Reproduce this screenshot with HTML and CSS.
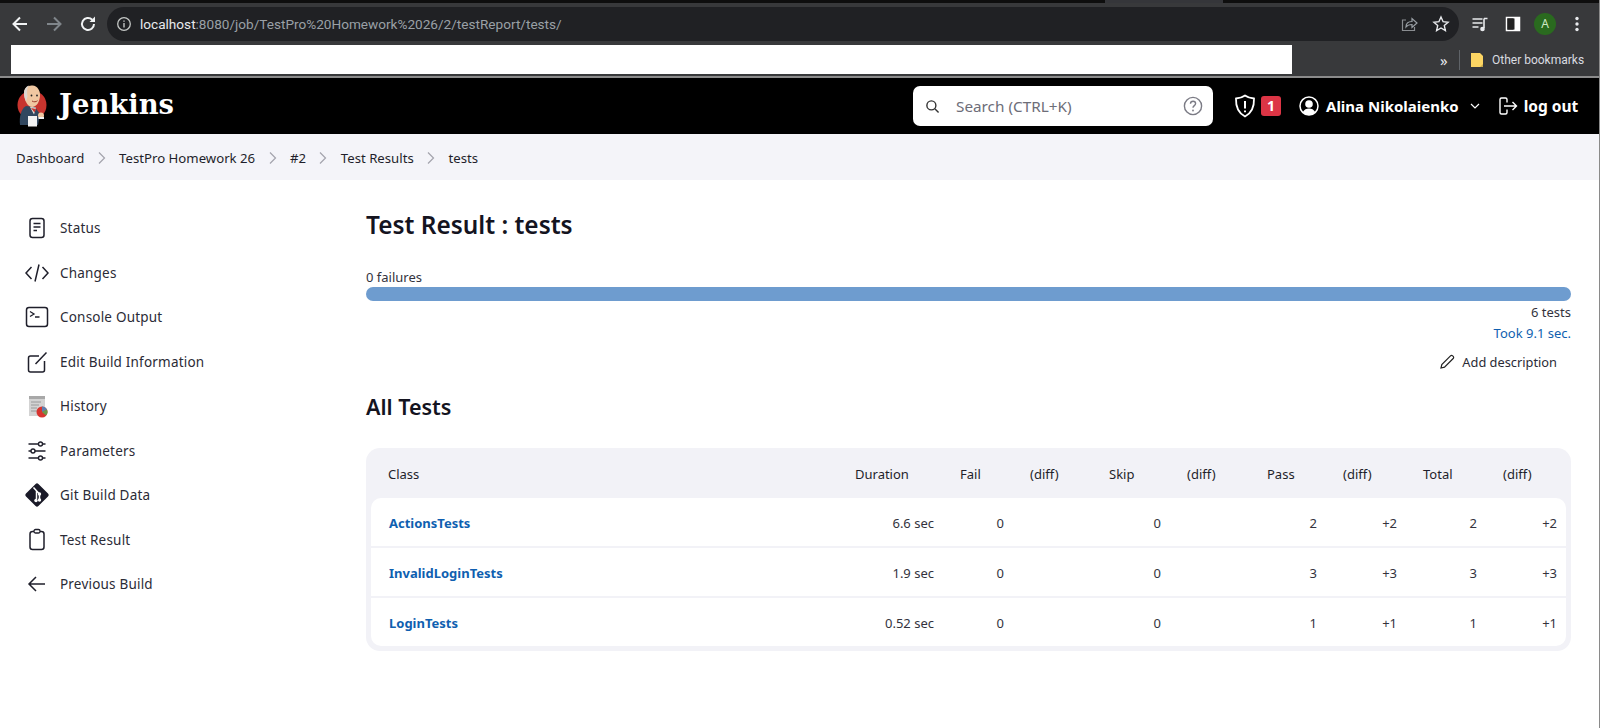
FILE: index.html
```html
<!DOCTYPE html>
<html lang="en">
<head>
  <meta charset="UTF-8" />
  <title>tests [Jenkins]</title>
  <link rel="stylesheet" href="styles.css">
</head>
<body>

  <div class="tabstrip"><div class="tab-edge"></div></div>

  <div class="toolbar">
    <svg class="nav-icon" viewBox="0 0 20 20"><path d="M17 10H4M10 3.5 3.5 10l6.500 6.500" fill="none" stroke="#f1f3f4" stroke-width="2"/></svg>
    <svg class="nav-icon" viewBox="0 0 20 20"><path d="M3 10h13M10 3.5l6.500 6.500-6.500 6.500" fill="none" stroke="#80868b" stroke-width="2"/></svg>
    <svg class="nav-icon" viewBox="0 0 20 20"><path d="M16 10a6 6 0 1 1-1.800-4.300" fill="none" stroke="#f1f3f4" stroke-width="2"/><path d="M17 2.500V8h-5.500z" fill="#f1f3f4"/></svg>
    <div class="omnibox">
      <svg class="info-icon" viewBox="0 0 16 16"><circle cx="8" cy="8" r="6.300" fill="none" stroke="#c4c7c5" stroke-width="1.300"/><path d="M8 7v4.500M8 4.500v1.300" stroke="#c4c7c5" stroke-width="1.400"/></svg>
      <span class="url"><span class="url-host">localhost</span>:8080/job/TestPro%20Homework%2026/2/testReport/tests/</span>
      <svg class="omni-icon" viewBox="0 0 18 18"><path d="M6 5H2.500v10.500h12V12" fill="none" stroke="#8a8d91" stroke-width="1.200"/><path d="M6 12c0-4 3-5.500 6-5.500V3.500L17 8l-5 4.500V9.500c-2.500 0-4.500.5-6 2.500z" fill="none" stroke="#9aa0a6" stroke-width="1.200"/></svg>
      <svg class="omni-icon" viewBox="0 0 18 18"><path d="m9 2 2.100 4.700 5 .5-3.800 3.400 1.100 5L9 13l-4.400 2.600 1.100-5L1.900 7.200l5-.5z" fill="none" stroke="#e8eaed" stroke-width="1.400"/></svg>
    </div>
    <div class="toolbar-right">
      <svg class="tool-icon" viewBox="0 0 18 18"><path d="M1.500 4h10M1.500 8h10M1.500 12h6" stroke="#e8eaed" stroke-width="1.600"/><path d="M13 3.500h3.500M13 3.500V13" stroke="#e8eaed" stroke-width="1.600" fill="none"/><circle cx="11.500" cy="14" r="2.300" fill="#e8eaed"/></svg>
      <svg class="tool-icon" viewBox="0 0 18 18"><rect x="2.500" y="2.500" width="13" height="13" fill="none" stroke="#fff" stroke-width="1.500"/><rect x="9.500" y="2.500" width="6" height="13" fill="#fff"/><rect x="3.500" y="3.500" width="7" height="11" fill="#222"/></svg>
      <div class="avatar">A</div>
      <svg class="tool-icon" viewBox="0 0 18 18"><circle cx="9" cy="3.500" r="1.700" fill="#e8eaed"/><circle cx="9" cy="9" r="1.700" fill="#e8eaed"/><circle cx="9" cy="14.500" r="1.700" fill="#e8eaed"/></svg>
    </div>
  </div>

  <div class="bookmarks">
    <div class="bookmark-blank"></div>
    <span class="more">»</span>
    <div class="bookmark-sep"></div>
    <svg class="folder" viewBox="0 0 14 16"><path d="M1 1h9l3 3v11H1z" fill="#fdd663"/><path d="M10 15h3v-3z" fill="#c9a94c"/></svg>
    <span class="bookmark-label">Other bookmarks</span>
  </div>

  <header class="jenkins-header">
    <svg class="logo" viewBox="0 0 30 42">
      <circle cx="15" cy="20" r="14.500" fill="#c8342e"/>
      <path d="M3 40c-1-8 1-16 6-19l9 1 5 7-2 11z" fill="#31475f"/>
      <path d="M13 22l6 .5-2 7z" fill="#e6e2dc"/>
      <path d="M14 23l5 1-1.500 3.500z" fill="#c8342e"/>
      <path d="M7 8c0-5 4-8 8.500-7.500 5 .5 8 5 7.500 10.500-.5 5.500-3 10.500-7.500 11C10 22 7 14 7 8z" fill="#f0c7a1"/>
      <path d="M7 8c0-4 2-6.500 5-7.500-2.500 3-2 7-1.500 11l-1.500 5C7.800 13.500 7 11 7 8z" fill="#ddd8d2"/>
      <circle cx="14.500" cy="10.500" r=".9" fill="#222"/>
      <circle cx="20" cy="10.500" r=".9" fill="#222"/>
      <path d="M15 16c2 1.200 4 1 5.500-.3" fill="none" stroke="#9b3a2a" stroke-width="1"/>
      <path d="M11 31h9v10.500h-9z" fill="#f2f2f2"/>
      <circle cx="24" cy="30.500" r="3" fill="#f0c7a1"/>
      <path d="M21.500 32h5.500v2h-5.500z" fill="#f2f2f2"/>
    </svg>
    <span class="logo-text">Jenkins</span>

    <div class="search-box">
      <svg class="search-icon" viewBox="0 0 16 16"><circle cx="6.800" cy="6.800" r="4.800" fill="none" stroke="#333" stroke-width="1.500"/><path d="m10.500 10.500 4 4" stroke="#333" stroke-width="1.500"/></svg>
      <span class="search-text">Search (CTRL+K)</span>
      <svg class="help-icon" viewBox="0 0 20 20"><circle cx="10" cy="10" r="8.600" fill="none" stroke="#7b7b85" stroke-width="1.400"/><path d="M7.500 7.800c0-1.500 1.100-2.500 2.600-2.500s2.500 1 2.500 2.300c0 2-2.600 2-2.600 4.200" fill="none" stroke="#7b7b85" stroke-width="1.400"/><circle cx="10" cy="14.500" r=".9" fill="#7b7b85"/></svg>
    </div>

    <svg class="shield" viewBox="0 0 22 24"><path d="M11 1.500c2.500 1.800 5.500 2.800 9 3 .3 8-2.300 14.500-9 18-6.700-3.500-9.300-10-9-18 3.500-.2 6.500-1.200 9-3z" fill="none" stroke="#fff" stroke-width="1.800"/><path d="M11 7v7.500M11 16.500v1.800" stroke="#fff" stroke-width="2"/></svg>
    <span class="badge">1</span>

    <svg class="user-icon" viewBox="0 0 20 20"><circle cx="10" cy="10" r="9" fill="none" stroke="#fff" stroke-width="1.500"/><circle cx="10" cy="8" r="3.800" fill="#fff"/><path d="M3.800 16c1.500-2.500 3.500-3.500 6.200-3.500s4.700 1 6.200 3.500c-1.500 2-3.800 3-6.200 3s-4.700-1-6.200-3z" fill="#fff"/></svg>
    <span class="user-name">Alina Nikolaienko</span>
    <svg class="user-chevron" viewBox="0 0 12 12"><path d="m2 4 4 4 4-4" fill="none" stroke="#fff" stroke-width="1.200"/></svg>
    <svg class="logout-icon" viewBox="0 0 20 20"><path d="M9 6.500v-3A1.500 1.500 0 0 0 7.500 2h-4A1.500 1.500 0 0 0 2 3.500v13A1.500 1.500 0 0 0 3.500 18h4A1.500 1.500 0 0 0 9 16.500v-3" fill="none" stroke="#fff" stroke-width="1.400"/><path d="M6 10h12.500M14.500 6l4 4-4 4" fill="none" stroke="#fff" stroke-width="1.400"/></svg>
    <span class="logout-text">log out</span>
  </header>

  <nav class="breadcrumbs">
    <span>Dashboard</span>
    <svg class="crumb-sep" viewBox="0 0 10 14"><path d="m2 1.500 5.500 5.500L2 12.500" fill="none" stroke="#a3a3ad" stroke-width="1.200"/></svg>
    <span>TestPro Homework 26</span>
    <svg class="crumb-sep" viewBox="0 0 10 14"><path d="m2 1.500 5.500 5.500L2 12.500" fill="none" stroke="#a3a3ad" stroke-width="1.200"/></svg>
    <span>#2</span>
    <svg class="crumb-sep" viewBox="0 0 10 14"><path d="m2 1.500 5.500 5.500L2 12.500" fill="none" stroke="#a3a3ad" stroke-width="1.200"/></svg>
    <span>Test Results</span>
    <svg class="crumb-sep" viewBox="0 0 10 14"><path d="m2 1.500 5.500 5.500L2 12.500" fill="none" stroke="#a3a3ad" stroke-width="1.200"/></svg>
    <span>tests</span>
  </nav>

  <div class="page">
    <aside class="sidebar">
      <a class="task">
        <svg class="task-icon" viewBox="0 0 24 24"><rect x="5" y="2.500" width="14" height="19" rx="2.500" fill="none" stroke="#1f1f2b" stroke-width="1.500"/><path d="M8.500 7.500h7M8.500 11h7M8.500 14.500h3.500" stroke="#1f1f2b" stroke-width="1.500"/></svg>
        Status
      </a>
      <a class="task">
        <svg class="task-icon" viewBox="0 0 24 24"><path d="M6.500 6 1 12l5.500 6M17.500 6l5.500 6-5.500 6M14 3.500 10 20.500" fill="none" stroke="#1f1f2b" stroke-width="1.500"/></svg>
        Changes
      </a>
      <a class="task">
        <svg class="task-icon" viewBox="0 0 24 24"><rect x="1.500" y="2.500" width="21" height="19" rx="2.500" fill="none" stroke="#1f1f2b" stroke-width="1.500"/><path d="m5 6.500 4 2.500-4 2.500M10 12h4.500" fill="none" stroke="#1f1f2b" stroke-width="1.300"/></svg>
        Console Output
      </a>
      <a class="task">
        <svg class="task-icon" viewBox="0 0 24 24"><path d="M14 6H5.500A2 2 0 0 0 3.500 8v12a2 2 0 0 0 2 2h12a2 2 0 0 0 2-2v-9" fill="none" stroke="#1f1f2b" stroke-width="1.500"/><path d="M10.500 14 21.500 2.500" stroke="#1f1f2b" stroke-width="1.500"/></svg>
        Edit Build Information
      </a>
      <a class="task">
        <svg class="task-icon" viewBox="0 0 24 24"><rect x="4" y="2" width="16" height="20" fill="#d3d3d3"/><path d="M4 2h16v3H4z" fill="#a8a8a8"/><path d="M6 8h10M6 11h8M6 14h6M6 17h6" stroke="#9a9a9a"/><circle cx="17" cy="18" r="5.500" fill="#d8342f"/><path d="M17 18v-5.500a5.500 5.500 0 0 1 5 3z" fill="#5c7fb0"/><path d="M17 18l5-2.500a5.500 5.500 0 0 1-1 6z" fill="#6c9a4a"/></svg>
        History
      </a>
      <a class="task">
        <svg class="task-icon" viewBox="0 0 24 24"><path d="M3.500 5h10M17.500 5h3M3.500 12h2.500M10 12h10.500M3.500 19h10M17.500 19h3" stroke="#1f1f2b" stroke-width="1.400"/><circle cx="15.500" cy="5" r="2" fill="none" stroke="#1f1f2b" stroke-width="1.400"/><circle cx="8" cy="12" r="2" fill="none" stroke="#1f1f2b" stroke-width="1.400"/><circle cx="15.500" cy="19" r="2" fill="none" stroke="#1f1f2b" stroke-width="1.400"/></svg>
        Parameters
      </a>
      <a class="task">
        <svg class="task-icon" viewBox="0 0 24 24"><path d="M10.600 1 1 10.600a2 2 0 0 0 0 2.800l9.600 9.600a2 2 0 0 0 2.800 0l9.600-9.600a2 2 0 0 0 0-2.800L13.400 1a2 2 0 0 0-2.800 0z" fill="#1a1a28"/><path d="M8.500 4.500 14.500 11v5M11.500 8v8" fill="none" stroke="#fff" stroke-width="1.500"/><circle cx="14.500" cy="11" r="1.700" fill="#fff"/><circle cx="14.500" cy="17" r="1.700" fill="#fff"/><circle cx="11" cy="17.500" r="1.700" fill="#fff"/></svg>
        Git Build Data
      </a>
      <a class="task">
        <svg class="task-icon" viewBox="0 0 24 24"><rect x="5" y="3.500" width="14" height="18" rx="2.500" fill="none" stroke="#1f1f2b" stroke-width="1.500"/><rect x="9" y="1.500" width="6" height="3.500" rx="1.500" fill="#fff" stroke="#1f1f2b" stroke-width="1.300"/></svg>
        Test Result
      </a>
      <a class="task">
        <svg class="task-icon" viewBox="0 0 24 24"><path d="M20 12H4.500M11 5l-7 7 7 7" fill="none" stroke="#1f1f2b" stroke-width="1.500"/></svg>
        Previous Build
      </a>
    </aside>

    <main class="content">
      <h1>Test Result : tests</h1>
      <div class="failures">0 failures</div>
      <div class="progress"></div>
      <div class="count">6 tests</div>
      <a class="took">Took 9.1 sec.</a>
      <div class="description">
        <svg class="pencil" viewBox="0 0 16 16"><path d="M2 14l.8-3.500L11.500 1.800c.6-.6 1.500-.6 2.100 0l.6.6c.6.6.6 1.500 0 2.100L5.500 13.200z" fill="none" stroke="#222" stroke-width="1.200"/></svg>
        Add description
      </div>
      <h2>All Tests</h2>

      <div class="table-wrap">
        <table class="results">
          <thead>
            <tr>
              <th>Class</th><th>Duration</th><th>Fail</th><th>(diff)</th><th>Skip</th><th>(diff)</th><th>Pass</th><th>(diff)</th><th>Total</th><th>(diff)</th>
            </tr>
          </thead>
          <tbody>
            <tr>
              <td><a>ActionsTests</a></td><td>6.6 sec</td><td>0</td><td></td><td>0</td><td></td><td>2</td><td>+2</td><td>2</td><td>+2</td>
            </tr>
            <tr>
              <td><a>InvalidLoginTests</a></td><td>1.9 sec</td><td>0</td><td></td><td>0</td><td></td><td>3</td><td>+3</td><td>3</td><td>+3</td>
            </tr>
            <tr>
              <td><a>LoginTests</a></td><td>0.52 sec</td><td>0</td><td></td><td>0</td><td></td><td>1</td><td>+1</td><td>1</td><td>+1</td>
            </tr>
          </tbody>
        </table>
      </div>
    </main>
  </div>

</body>
</html>
```

FILE: styles.css
```css
html, body {
  height: 100%;
}

body {
  margin: 0;
  box-sizing: border-box;
  border-right: 1px solid #8a8a8a;
  font-family: "Noto Sans", "Open Sans", sans-serif;
  font-size: 14px;
  background-color: #fff;
  color: #14141f;
  overflow: hidden;
}

/* browser chrome */
.tabstrip {
  height: 3px;
  background-color: #0e0e0e;
  padding-left: 1105px;
}

.tab-edge {
  width: 118px;
  height: 3px;
  background-color: #35363a;
}

.toolbar {
  height: 42px;
  background-color: #38393b;
  display: flex;
  align-items: center;
  padding-left: 10px;
}

.nav-icon {
  width: 20px;
  height: 20px;
  margin-right: 14px;
  flex-shrink: 0;
}

.omnibox {
  width: 1352px;
  height: 34px;
  flex-shrink: 0;
  margin-left: -5px;
  background-color: #202124;
  border-radius: 17px;
  display: flex;
  align-items: center;
  color: #9aa0a6;
  font-family: "Roboto", sans-serif;
  font-size: 13.6px;
}

.info-icon {
  width: 16px;
  height: 16px;
  margin-left: 9px;
  margin-right: 8px;
}

.url {
  flex: 1;
}

.url-host {
  color: #e8eaed;
}

.omni-icon {
  width: 18px;
  height: 18px;
  margin-right: 14px;
}

.omni-icon:last-child {
  margin-right: 9px;
}

.toolbar-right {
  display: flex;
  align-items: center;
  margin-left: 12px;
}

.tool-icon {
  width: 18px;
  height: 18px;
  margin-right: 15px;
  flex-shrink: 0;
}

.tool-icon:last-child {
  margin-right: 0;
}

.avatar {
  width: 22px;
  height: 22px;
  flex-shrink: 0;
  border-radius: 50%;
  background-color: #2a6a1f;
  color: #cfe8c4;
  font-size: 12px;
  line-height: 22px;
  text-align: center;
  margin-right: 12px;
  margin-left: -3px;
}

.bookmarks {
  height: 29px;
  padding-bottom: 2px;
  background-color: #38393b;
  border-bottom: 2px solid #8b8b8b;
  display: flex;
  align-items: center;
  padding-left: 11px;
}

.bookmark-blank {
  width: 1281px;
  height: 29px;
  background-color: #fff;
}

.more {
  margin-left: 148px;
  color: #e8eaed;
  font-size: 15px;
  width: 14px;
}

.bookmark-sep {
  width: 1px;
  height: 20px;
  margin-left: 5px;
  background-color: #5f6368;
}

.folder {
  width: 14px;
  height: 16px;
  margin-left: 10px;
}

.bookmark-label {
  margin-left: 8px;
  color: #dadce0;
  font-size: 12px;
  font-family: "Roboto", sans-serif;
}

/* jenkins header */
.jenkins-header {
  height: 56px;
  background-color: #000;
  display: flex;
  align-items: center;
  color: #fff;
  padding-left: 17px;
}

.logo {
  width: 30px;
  height: 42px;
}

.logo-text {
  margin-left: 12px;
  margin-bottom: 4px;
  font-family: "DejaVu Serif", serif;
  font-weight: bold;
  font-size: 27.4px;
  width: 854px;
}

.search-box {
  width: 300px;
  height: 40px;
  background-color: #fff;
  border-radius: 7px;
  display: flex;
  align-items: center;
}

.search-icon {
  width: 15px;
  height: 15px;
  margin-left: 12px;
}

.search-text {
  margin-left: 16px;
  flex: 1;
  color: #6d6d78;
  font-size: 15.3px;
}

.help-icon {
  width: 20px;
  height: 20px;
  margin-right: 10px;
}

.shield {
  width: 22px;
  height: 24px;
  margin-left: 21px;
}

.badge {
  width: 20px;
  height: 20px;
  margin-left: 5px;
  border-radius: 3px;
  background-color: #dc3545;
  font-weight: bold;
  font-size: 14px;
  line-height: 20px;
  text-align: center;
}

.user-icon {
  width: 20px;
  height: 20px;
  margin-left: 18px;
}

.user-name {
  margin-left: 7px;
  font-weight: bold;
  font-size: 15px;
}

.user-chevron {
  width: 12px;
  height: 12px;
  margin-left: 10px;
}

.logout-icon {
  width: 20px;
  height: 20px;
  margin-left: 17px;
}

.logout-text {
  margin-left: 6px;
  font-weight: bold;
  font-size: 15.5px;
}

/* breadcrumb bar */
.breadcrumbs {
  height: 46px;
  padding-top: 2px;
  box-sizing: border-box;
  background-color: #f4f4f9;
  display: flex;
  align-items: center;
  padding-left: 16px;
  font-size: 13.2px;
  color: #1f1f2b;
}

.crumb-sep {
  width: 10px;
  height: 14px;
  margin: 0 12.4px;
}

/* page */
.page {
  display: flex;
}

.sidebar {
  width: 366px;
  flex-shrink: 0;
  padding-top: 26px;
  box-sizing: border-box;
}

.task {
  height: 44.5px;
  display: flex;
  align-items: center;
  padding-left: 25px;
  font-size: 13.5px;
  letter-spacing: 0.2px;
  color: #2b2b36;
}

.task-icon {
  width: 24px;
  height: 24px;
  margin-right: 11px;
}

.content {
  flex: 1;
  padding-top: 29px;
  padding-right: 28px;
}

h1 {
  margin: 0;
  font-size: 24.4px;
  line-height: 32px;
  font-weight: 600;
}

.failures {
  margin-top: 26px;
  font-size: 13px;
  line-height: 20px;
  color: #33333d;
}

.progress {
  height: 14px;
  border-radius: 7px;
  background-color: #6e9ccf;
}

.count {
  margin-top: 1px;
  text-align: right;
  font-size: 13px;
  line-height: 20px;
  color: #33333d;
}

.took {
  display: block;
  margin-top: 1px;
  text-align: right;
  font-size: 13px;
  line-height: 20px;
  color: #0f5fb0;
}

.description {
  display: flex;
  justify-content: flex-end;
  align-items: center;
  margin-top: 9px;
  padding-right: 14px;
  font-size: 12.8px;
  line-height: 20px;
  color: #2b2b36;
}

.pencil {
  width: 16px;
  height: 16px;
  margin-right: 7px;
}

h2 {
  margin: 21px 0 0;
  font-size: 21.5px;
  line-height: 28px;
  font-weight: 600;
}

.table-wrap {
  margin-top: 27px;
  padding: 0 5px 5px;
  border-radius: 14px;
  background-color: #f2f2f7;
}

.results {
  width: 100%;
  table-layout: fixed;
  border-collapse: separate;
  border-spacing: 0;
  font-size: 13px;
}

.results th, .results td {
  padding: 2px 9px 0 17px;
}

.results th {
  height: 50px;
  box-sizing: border-box;
  font-weight: 400;
  text-align: left;
  color: #1f1f2b;
}

.results td {
  height: 50px;
  box-sizing: border-box;
  background-color: #fff;
  text-align: right;
  color: #33333d;
  border-bottom: 2px solid #f2f2f7;
}

.results tr:last-child td {
  height: 48px;
  border-bottom: none;
}

.results td:first-child {
  padding-left: 18px;
  text-align: left;
  font-weight: 700;
}

.results td:first-child a {
  color: #0f5fb0;
}

.results th:first-child {
  padding-left: 17px;
}

.results tbody tr:first-child td:first-child { border-top-left-radius: 10px; }
.results tbody tr:first-child td:last-child { border-top-right-radius: 10px; }
.results tbody tr:last-child td:first-child { border-bottom-left-radius: 10px; }
.results tbody tr:last-child td:last-child { border-bottom-right-radius: 10px; }

.results th:nth-child(1) { width: 467px; }
.results th:nth-child(2) { width: 105px; }
.results th:nth-child(3) { width: 70px; }
.results th:nth-child(4) { width: 79px; }
.results th:nth-child(5) { width: 78px; }
.results th:nth-child(6) { width: 80px; }
.results th:nth-child(7) { width: 76px; }
.results th:nth-child(8) { width: 80px; }
.results th:nth-child(9) { width: 80px; }
.results th:nth-child(10) { width: 80px; }
```
